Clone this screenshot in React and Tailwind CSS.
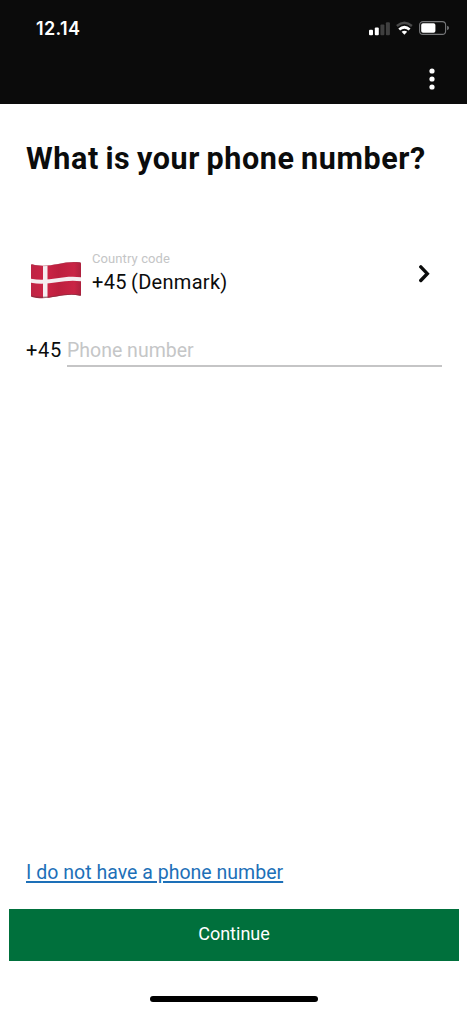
function StatusIcons() {
  return (
    <svg width="84" height="20" viewBox="0 0 84 20" className="block">
      <rect x="1" y="11.8" width="4" height="5.4" rx="1" fill="#fff" />
      <rect x="6.8" y="9.6" width="4" height="7.6" rx="1" fill="#fff" />
      <rect x="12.4" y="6.6" width="4" height="10.6" rx="1" fill="#3f3f3f" />
      <rect x="17.9" y="4.2" width="4" height="13" rx="1" fill="#3f3f3f" />
      <g fill="none" strokeWidth="2.5">
        <path d="M28.9 8Q36.4 1.6 43.9 8" stroke="#4a4a4a" />
        <path d="M31.2 11.5Q36.4 6.9 41.6 11.5" stroke="#fff" strokeWidth="2.8" />
      </g>
      <path d="M33.6 13.8Q36.4 11.8 39.2 13.8L36.4 16.8Z" fill="#fff" />
      <rect x="51.6" y="3.6" width="26" height="12.8" rx="3.4" fill="none" stroke="#77787a" strokeWidth="1.1" />
      <rect x="53.2" y="5.2" width="14.2" height="9.6" rx="1.8" fill="#fff" />
      <path d="M79.1 7.8Q81 8.4 81 10T79.1 12.2Z" fill="#77787a" />
    </svg>
  );
}

function DenmarkFlag() {
  return (
    <svg width="52" height="38" viewBox="0 0 52 38" className="block">
      <defs>
        <linearGradient id="cloth" x1="0" x2="1" y1="0" y2="0">
          <stop offset="0" stopColor="#bd2444" />
          <stop offset="0.3" stopColor="#cd2446" />
          <stop offset="0.55" stopColor="#bd1f3e" />
          <stop offset="0.85" stopColor="#c92445" />
          <stop offset="1" stopColor="#a9203c" />
        </linearGradient>
        <clipPath id="wave">
          <path d="M1 4Q1 3 2.2 3.3C20 8 32-1 50 1.3Q51 1.5 51 2.4V34Q51 35 50 34.7C33 31 19 40.5 2 36Q1 35.7 1 34.8Z" />
        </clipPath>
      </defs>
      <g clipPath="url(#wave)">
        <rect width="52" height="38" fill="url(#cloth)" />
        <path d="M0 17.5C20 21.5 32 13.5 52 16.5V20.5C33 17.5 19 25.5 0 21.5Z" fill="#f5edf0" />
        <path d="M13 0H17.5V38H13Z" fill="#f5edf0" />
        <path d="M1 35.3C20 40 32 31 51 34.3" fill="none" stroke="#77333f" strokeWidth="1.4" opacity=".65" />
        <path d="M1 3.5C20 8 32-1 51 1.7" fill="none" stroke="#93505d" strokeWidth=".8" opacity=".55" />
      </g>
    </svg>
  );
}

export default function App() {
  return (
    <div className="flex h-[1011px] w-[467px] flex-col overflow-hidden bg-white font-['Roboto',sans-serif] text-[#0b0c0c]">
      <header className="h-[104px] shrink-0 bg-[#0b0b0b]">
        <div className="flex h-14 items-center justify-between pr-[15px] pl-9">
          <span className="pt-px font-['Inter',sans-serif] text-[18px] leading-5 font-semibold tracking-[0.35px] text-white">12.14</span>
          <StatusIcons />
        </div>
        <div className="flex justify-end pt-[10px] pr-[30px]">
          <button aria-label="More options" className="block">
            <svg width="10" height="26" viewBox="0 0 10 26" fill="#fff" className="block">
              <circle cx="5" cy="5" r="2.6" />
              <circle cx="5" cy="13" r="2.6" />
              <circle cx="5" cy="21" r="2.6" />
            </svg>
          </button>
        </div>
      </header>

      <main className="flex grow flex-col">
        <h1 className="mt-[35px] ml-[26px] text-[30.5px] leading-10 font-bold tracking-[0.6px] [word-spacing:-1.6px] whitespace-nowrap">What is your phone number?</h1>

        <button className="mt-[70px] flex h-[52px] items-center pr-[36px] pl-[30px] text-left">
          <span className="mt-[9px]"><DenmarkFlag /></span>
          <span className="ml-[10px] grow whitespace-nowrap pb-[6px]">
            <span className="block text-[13px] leading-5 tracking-[0.1px] text-[#c4c5c6]">Country code</span>
            <span className="block text-[20px] leading-[26px] tracking-[0.3px] [word-spacing:-1px]">+45 (Denmark)</span>
          </span>
          <svg width="14" height="20" viewBox="0 0 14 20" fill="none" stroke="#0b0c0c" strokeWidth="3.4" strokeLinecap="round" className="block">
            <path d="M3.8 1.9L10.3 8.7L3.8 15.5" />
          </svg>
        </button>

        <label className="mt-[34px] ml-[26px] flex h-[32px] w-[416px] text-[19.5px] leading-[30px]">
          <span className="w-[41px] shrink-0 text-[20px] tracking-[0.7px] whitespace-nowrap">+45</span>
          <input placeholder="Phone number" className="h-[32px] w-[375px] border-b-2 border-[#c5c5c6] outline-none placeholder:text-[#c5c6c7]" />
        </label>

        <a href="#" className="mt-auto mb-[21px] ml-[26px] self-start text-[19.5px] leading-[30px] tracking-[0.02px] whitespace-nowrap text-[#1d70b8] underline decoration-2 underline-offset-2">I do not have a phone number</a>
        <button className="mx-[9px] mr-[8px] h-[52px] bg-[#00703c] pb-[3px] text-[18px] text-white">Continue</button>
      </main>

      <footer className="flex h-[50px] shrink-0 justify-center pt-[35px]">
        <div className="h-[6px] w-[168px] rounded-full bg-black" />
      </footer>
    </div>
  );
}
